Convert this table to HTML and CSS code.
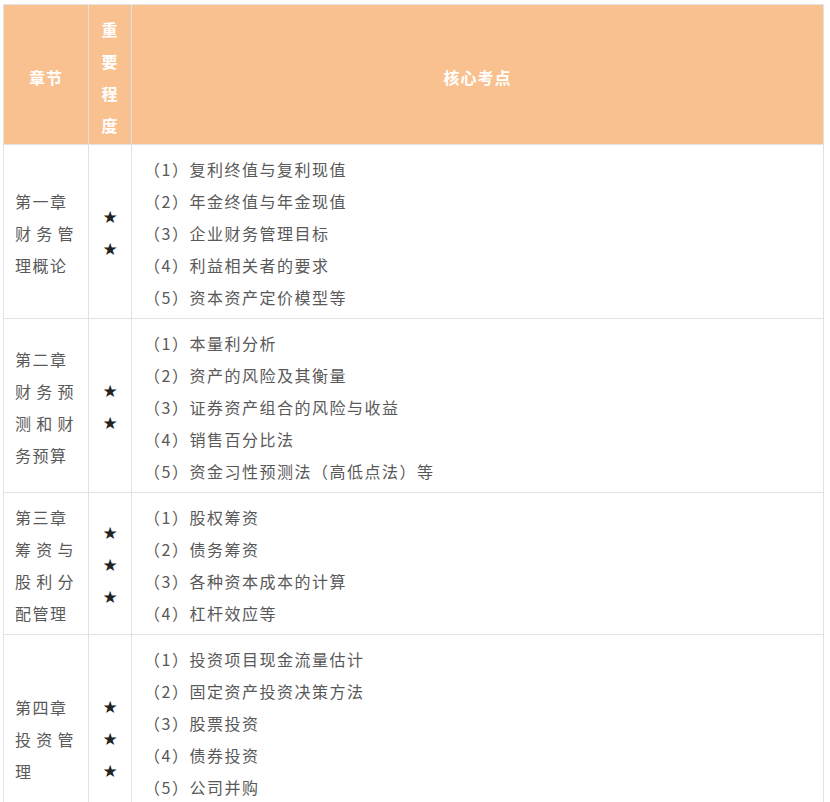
FILE: index.html
```html
<!DOCTYPE html>
<html lang="zh-CN">
<head>
<meta charset="utf-8">
<title>章节考点</title>
<link rel="stylesheet" href="styles.css">
</head>
<body>
<div class="wrap">
<table class="plan">
  <colgroup>
    <col class="c-chap">
    <col class="c-star">
    <col class="c-main">
  </colgroup>
  <thead>
    <tr>
      <th class="h-chap">章节</th>
      <th class="h-star">重<br>要<br>程<br>度</th>
      <th class="h-main">核心考点</th>
    </tr>
  </thead>
  <tbody>
    <tr>
      <td class="chap"><div class="chap-txt">第一章<br>财务管理概论</div></td>
      <td class="stars">★<br>★</td>
      <td class="items">
        <p>（1）复利终值与复利现值</p>
        <p>（2）年金终值与年金现值</p>
        <p>（3）企业财务管理目标</p>
        <p>（4）利益相关者的要求</p>
        <p>（5）资本资产定价模型等</p>
      </td>
    </tr>
    <tr>
      <td class="chap"><div class="chap-txt">第二章<br>财务预测和财务预算</div></td>
      <td class="stars">★<br>★</td>
      <td class="items">
        <p>（1）本量利分析</p>
        <p>（2）资产的风险及其衡量</p>
        <p>（3）证券资产组合的风险与收益</p>
        <p>（4）销售百分比法</p>
        <p>（5）资金习性预测法（高低点法）等</p>
      </td>
    </tr>
    <tr>
      <td class="chap"><div class="chap-txt">第三章<br>筹资与股利分配管理</div></td>
      <td class="stars">★<br>★<br>★</td>
      <td class="items">
        <p>（1）股权筹资</p>
        <p>（2）债务筹资</p>
        <p>（3）各种资本成本的计算</p>
        <p>（4）杠杆效应等</p>
      </td>
    </tr>
    <tr>
      <td class="chap"><div class="chap-txt">第四章<br>投资管理</div></td>
      <td class="stars">★<br>★<br>★</td>
      <td class="items items-more">
        <p>（1）投资项目现金流量估计</p>
        <p>（2）固定资产投资决策方法</p>
        <p>（3）股票投资</p>
        <p>（4）债券投资</p>
        <p>（5）公司并购</p>
      </td>
    </tr>
  </tbody>
</table>
</div>
</body>
</html>
```

FILE: styles.css
```css
html, body {
  margin: 0;
  padding: 0;
  background: #ffffff;
}

body {
  font-family: "Noto Sans CJK SC", "Noto Sans", sans-serif;
  font-size: 16px;
  color: #595959;
}

.wrap {
  padding: 4px 0 0 3px;
}

.plan {
  width: 821px;
  border-collapse: collapse;
  table-layout: fixed;
}

.c-chap { width: 85px; }
.c-star { width: 43px; }

.plan th,
.plan td {
  border: 1px solid #e2e2e2;
  vertical-align: middle;
}

.plan th {
  background: #f9c190;
  color: #ffffff;
  font-weight: bold;
  letter-spacing: 1px;
  line-height: 32px;
  text-align: center;
  padding: 8px 0 3px;
}

.h-star {
  letter-spacing: 0;
}

.plan td {
  line-height: 32px;
  letter-spacing: 1.5px;
  padding: 8px 0 5px;
}

.chap {
  padding-left: 11px !important;
  padding-right: 13px !important;
}

.chap-txt {
  text-align: justify;
}

.stars {
  text-align: center;
  font-family: "DejaVu Sans", sans-serif;
  font-size: 17px;
  color: #222222;
  letter-spacing: 0 !important;
}

.items {
  padding-left: 12px !important;
}

.items.items-more {
  vertical-align: top;
  padding-bottom: 37px;
}

.items p {
  margin: 0;
}
```
